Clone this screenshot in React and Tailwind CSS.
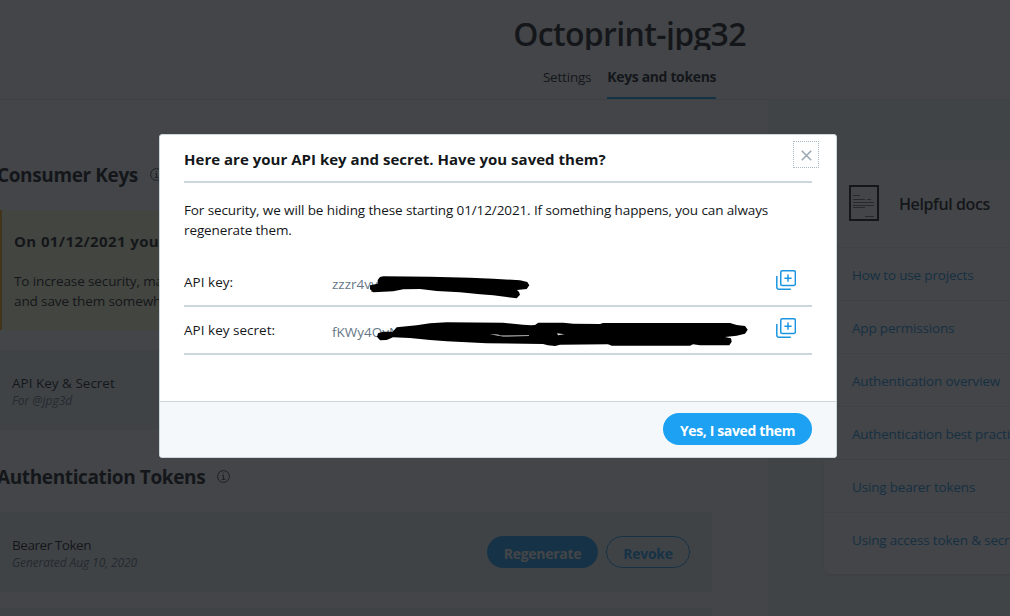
import React from "react";

const docs = [
  "How to use projects",
  "App permissions",
  "Authentication overview",
  "Authentication best practices",
  "Using bearer tokens",
  "Using access token & secret",
];

function InfoIcon() {
  return (
    <svg className="mb-[2px] h-[13px] w-[13px] shrink-0" viewBox="0 0 13 13" fill="none" stroke="#3a4650">
      <circle cx="6.5" cy="6.5" r="5.9" />
      <path d="M5 5.6h1.6v3.6M4.8 9.4h3.6M6.1 3.4h1" />
    </svg>
  );
}

function CopyIcon() {
  return (
    <svg className="h-[20px] w-[20px]" viewBox="0 0 20 20" fill="none" stroke="#1b95e0" strokeWidth="1.5">
      <rect x="4.75" y="0.75" width="14.6" height="14.8" rx="1.6" />
      <path d="M12 4.6v7.2M8.4 8.2h7.2" />
      <path d="M0.8 6v11.2a2 2 0 0 0 2 2h12" />
    </svg>
  );
}

function DocIcon() {
  return (
    <svg className="h-[36px] w-[30px]" viewBox="0 0 30 36" fill="none" stroke="#14171a">
      <rect x="1" y="1" width="28" height="34" strokeWidth="2" />
      <path strokeOpacity="0.6" d="M4 10.5h7M4 14.5h12M18 14.5h4M4 17.5h21M4 20.5h21M4 22.5h12M16 31.5h9" />
    </svg>
  );
}

function Header() {
  return (
    <header className="flex h-[100px] flex-col items-center border-b border-[#e1e8ed] bg-white pl-[249px]">
      <h1 className="mt-[14px] h-[37px] overflow-hidden text-[32px] leading-[40px] font-semibold tracking-[-0.65px] whitespace-nowrap">
        Octoprint-jpg32
      </h1>
      <nav className="mt-[17px] flex h-[32px] gap-4 text-[14px] leading-5 whitespace-nowrap">
        <span className="text-[13.5px] tracking-[-0.2px]">Settings</span>
        <span className="h-[32px] border-b-2 border-[#1da1f2] font-bold tracking-[-0.36px]">Keys and tokens</span>
      </nav>
    </header>
  );
}

function Main() {
  return (
    <main className="h-full w-[768px] shrink-0 bg-white whitespace-nowrap">
      <div className="flex h-full flex-col pt-[61px]">
        <div className="-ml-[3px] flex h-[28px] items-center gap-3">
          <h2 className="text-[19px] leading-7 font-bold tracking-[-0.38px]">Consumer Keys</h2>
          <InfoIcon />
        </div>
        <section className="mt-[21px] h-[120px] w-[712px] border-l-2 border-[#ffad1f] bg-[#fdfdd6] pt-[21px] pl-3">
          <h3 className="text-[15px] leading-5 font-bold tracking-[0.4px]">On 01/12/2021 you</h3>
          <p className="mt-[20px] text-[13.5px] leading-5 tracking-[-0.11px]">
            To increase security, make
            <br />
            and save them somewhere
          </p>
        </section>
        <section className="mt-[20px] h-[80px] w-[712px] bg-[#eef3f6] pt-[23px] pl-3">
          <p className="text-[13.5px] leading-5">API Key &amp; Secret</p>
          <p className="text-[12px] leading-4 text-[#657786] italic">For @jpg3d</p>
        </section>
        <div className="mt-[33px] -ml-[3px] flex h-[28px] items-center gap-3">
          <h2 className="text-[19px] leading-7 font-bold tracking-[-0.38px]">Authentication Tokens</h2>
          <InfoIcon />
        </div>
        <section className="mt-[21px] flex h-[80px] w-[712px] items-center justify-between bg-[#eef3f6] pr-[22px] pl-3">
          <div className="pt-[2px]">
            <p className="text-[13.5px] leading-5 tracking-[-0.45px]">Bearer Token</p>
            <p className="text-[12px] leading-4 tracking-[-0.1px] text-[#657786] italic">Generated Aug 10, 2020</p>
          </div>
          <div className="flex gap-2 text-[14px] font-bold tracking-[-0.3px]">
            <button className="h-8 w-[111px] rounded-full bg-[#1da1f2] pt-[2px] text-white">Regenerate</button>
            <button className="h-8 w-[84px] rounded-full border border-[#1da1f2] pt-[2px] text-[#1da1f2]">Revoke</button>
          </div>
        </section>
        <section className="mt-4 w-[712px] flex-1 bg-[#eef3f6]" />
      </div>
    </main>
  );
}

function Sidebar() {
  return (
    <aside className="h-full flex-1 pt-[60px] pl-[56px]">
      <div className="h-[414px] w-[300px] rounded-md bg-white whitespace-nowrap shadow-sm">
        <div className="flex h-[87px] items-center gap-5 pb-px pl-[25px]">
          <DocIcon />
          <h2 className="pt-[2px] text-[16px] font-semibold tracking-[-0.4px]">Helpful docs</h2>
        </div>
        {docs.map((label) => (
          <div key={label} className="h-[53px] border-t border-[#e6ecf0] pt-[17px] pl-[28px]">
            <a className="block text-[13.5px] leading-5 tracking-[-0.18px] text-[#1b95e0]">{label}</a>
          </div>
        ))}
      </div>
    </aside>
  );
}

function Scribble() {
  return (
    <svg className="pointer-events-none absolute top-[135px] left-[210px] h-[84px] w-[385px]" viewBox="370 270 385 84">
      <path d="M377.7 280L380 277 383.3 276.3 430 276.7 470 277.7 493.3 278.7 520 280.3 527.3 282 529.3 285.3 526.7 289 517 290 519 292 520 294.7 516.7 298.3 506.7 297 493.3 295.3 480 294.3 460 292.3 436.7 291 420 289 403.3 289.3 393.3 291.3 373.3 292.3 370 289.3 370 285.3 377.7 283.7Z" />
      <path d="M377 336.7L378 333.3 382.7 331.7 392.7 331.7 396.7 327.3 416.7 325.3 430 323.3 446.7 322.3 503 322.7 523 324.7 531 325.3 535 325 538.3 322.7 563.3 322.7 573.3 323.7 600 324 603 323 730 323 736.7 325 745 326 747.7 329.7 745 333.7 736.7 335.7 725 337 731 338.3 731.7 341.7 729.3 345.3 700 345.3 693 344.3 690 345.7 611.7 345.7 608 344.3 560 344.7 555 346 548 345.3 543 344 486.7 343.3 466.7 342.3 446.7 341.3 430 340 410 338 393 337.3 386.7 340 380 340.3Z" />
      <path d="M489.5 334.2L498 334.6 500 335.6 529 335.3 529 336 503 336.6ZM557 333.2L564.5 334.2 558 335.2Z" fill="#d5d9dc" />
    </svg>
  );
}

function Modal() {
  return (
    <div className="relative flex h-[324px] w-[678px] flex-col overflow-hidden rounded-[3px] border border-[#ccd6dd] bg-white whitespace-nowrap">
      <div className="flex h-[266px] flex-col px-6">
        <div className="flex h-[48px] shrink-0 items-start justify-between border-b-2 border-[#ccd6dd]">
          <h2 className="mt-[14px] text-[15px] leading-5 font-bold tracking-[0.02px]">
            Here are your API key and secret. Have you saved them?
          </h2>
          <button className="mt-[6px] -mr-[7px] flex h-[27px] w-[26px] items-center justify-center border border-dotted border-[#aab8c2] pt-px">
            <svg className="h-[11px] w-[11px]" viewBox="0 0 11 11" fill="none" stroke="#9aa8b3" strokeWidth="1.6">
              <path d="M0.8 0.8l9.4 9.4M10.2 0.8L0.8 10.2" />
            </svg>
          </button>
        </div>
        <p className="mt-[17px] text-[13.5px] leading-5 tracking-[-0.11px]">
          For security, we will be hiding these starting 01/12/2021. If something happens, you can always
          <br />
          regenerate them.
        </p>
        <div className="mt-[19px] flex h-[48px] shrink-0 items-start border-b-2 border-[#ccd6dd]">
          <span className="mt-[13px] w-[148px] text-[13.5px] leading-5 font-medium tracking-[0.02px]">API key:</span>
          <span className="mt-[15px] flex-1 text-[13.5px] leading-5 text-[#657786]">zzzr4vy</span>
          <span className="mt-[11px] mr-4">
            <CopyIcon />
          </span>
        </div>
        <div className="flex h-[48px] shrink-0 items-start border-b-2 border-[#ccd6dd]">
          <span className="mt-[13px] w-[148px] text-[13.5px] leading-5 font-medium tracking-[0.02px]">API key secret:</span>
          <span className="mt-[15px] flex-1 text-[13.5px] leading-5 text-[#657786]">fKWy4QyN</span>
          <span className="mt-[11px] mr-4">
            <CopyIcon />
          </span>
        </div>
      </div>
      <div className="flex flex-1 items-start justify-end border-t border-[#ccd6dd] bg-[#f5f8fa] pt-[11px] pr-6">
        <button className="h-8 w-[149px] rounded-full bg-[#1da1f2] pt-[2px] text-[14px] font-bold tracking-[-0.36px] text-white">
          Yes, I saved them
        </button>
      </div>
      <Scribble />
    </div>
  );
}

export default function App() {
  return (
    <div className="relative h-[616px] w-[1010px] overflow-hidden bg-[#f5f8fa] font-['Open_Sans','Noto_Sans',sans-serif] text-[#14171a]">
      <Header />
      <div className="flex h-[516px]">
        <Main />
        <Sidebar />
      </div>
      <div className="absolute inset-0 flex items-start bg-[#14171a]/80 pt-[134px] pl-[159px]">
        <Modal />
      </div>
    </div>
  );
}
